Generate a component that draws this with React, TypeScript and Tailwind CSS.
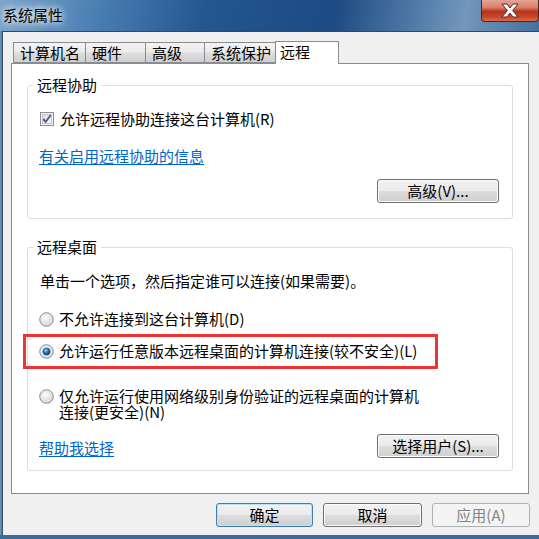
import React from "react";

const font = "font-['Noto_Sans_CJK_SC','Noto_Sans',sans-serif]";

function CheckBox() {
  return (
    <svg width="14" height="14" viewBox="0 0 14 14" className="shrink-0">
      <defs>
        <linearGradient id="cbg" x1="0" y1="0" x2="1" y2="1">
          <stop offset="0" stopColor="#d8d8d8" />
          <stop offset="1" stopColor="#fbfbfb" />
        </linearGradient>
      </defs>
      <rect x="0.5" y="0.5" width="13" height="13" fill="#f4f4f4" stroke="#8e8f8f" />
      <rect x="2.5" y="2.5" width="9" height="9" fill="url(#cbg)" stroke="#c6c6c6" />
      <path d="M3.2 7 L5.7 9.8 L10.8 3" fill="none" stroke="#4a5f97" strokeWidth="1.9" />
    </svg>
  );
}

function Radio({ checked }: { checked?: boolean }) {
  return (
    <svg width="15" height="15" viewBox="0 0 15 15" className="shrink-0">
      <defs>
        <radialGradient id="rbg" cx="0.4" cy="0.35" r="0.7">
          <stop offset="0" stopColor="#ffffff" />
          <stop offset="1" stopColor="#cfcfcf" />
        </radialGradient>
        <radialGradient id="rdot" cx="0.4" cy="0.35" r="0.65">
          <stop offset="0" stopColor="#9ad8ff" />
          <stop offset="0.5" stopColor="#1b7ccf" />
          <stop offset="1" stopColor="#0f3f74" />
        </radialGradient>
      </defs>
      <circle cx="7.5" cy="7.5" r="6.8" fill="url(#rbg)" stroke="#8c8c8c" />
      <circle cx="7.5" cy="7.5" r="5" fill="none" stroke="#e8e8e8" />
      {checked && <circle cx="7.5" cy="7.5" r="3.6" fill="url(#rdot)" stroke="#1d3f66" strokeWidth="0.6" />}
    </svg>
  );
}

function Btn({ label, w, disabled, focused }: { label: string; w: string; disabled?: boolean; focused?: boolean }) {
  const base = "h-[24px] rounded-[3px] border flex items-center justify-center text-[15px] leading-[16px]";
  if (disabled)
    return <div className={`${base} ${w} border-[#adb2b5] bg-[#f4f4f4] text-[#838383]`}>{label}</div>;
  return (
    <div
      className={`${base} ${w} ${
        focused ? "border-[#3c7fb1] shadow-[inset_0_0_0_1px_#b6e3f7]" : "border-[#707070] shadow-[inset_0_0_0_1px_#fbfbfb]"
      } bg-[linear-gradient(#f2f2f2_0%,#ebebeb_48%,#dddddd_52%,#cfcfcf_100%)] text-black`}
    >
      {label}
    </div>
  );
}

function Tab({ label, w, selected }: { label: string; w: string; selected?: boolean }) {
  if (selected)
    return (
      <div className={`${w} h-[23px] -mb-[1px] -ml-[1px] relative z-10 border border-b-0 border-[#898c95] bg-white pl-[4px] pt-[2px] text-[15px] leading-[16px]`}>
        {label}
      </div>
    );
  return (
    <div className={`${w} h-[21px] -ml-[1px] first:ml-0 border border-[#898c95] bg-[linear-gradient(#f3f3f3_0%,#ebebeb_45%,#dddddd_55%,#cfcfcf_100%)] pl-[6px] pt-[2px] text-[15px] leading-[16px]`}>
      {label}
    </div>
  );
}

export default function App() {
  return (
    <div className={`w-[539px] h-[539px] flex flex-col overflow-hidden bg-[#3d6a99] ${font} text-black`}>
      {/* Title bar */}
      <div className="h-[31px] shrink-0 flex justify-between bg-[linear-gradient(100deg,#7ea6cc_0%,#4a7fb3_18%,#245690_38%,#1d4a82_62%,#5c86b0_80%,#7396ba_86%,#44709e_100%)]">
        <div className="pl-[3px] pt-[6px] text-[15px] leading-[18px] text-black [text-shadow:0_0_6px_#ffffff,0_0_10px_#ffffff]">
          系统属性
        </div>
        <div className="w-[58px] h-[22px] rounded-b-[4px] border border-t-0 border-[#4c2520] bg-[linear-gradient(#e5a393_0%,#d8806b_35%,#b8321c_55%,#c8452a_80%,#e06a45_100%)] flex items-center justify-center">
          <svg width="22" height="15" viewBox="0 0 22 15">
            <path d="M3 1 L8 1 L11 5 L14 1 L19 1 L13.6 7.5 L19 14 L14 14 L11 10 L8 14 L3 14 L8.4 7.5 Z" fill="#ffffff" stroke="#5a2a22" strokeWidth="1" />
          </svg>
        </div>
      </div>

      {/* Body */}
      <div className="flex-1 flex">
        <div className="w-[3px] bg-[linear-gradient(90deg,#6f95b8,#4d7aa2)] border-r border-[#33506d]" />
        <div className="flex-1 flex flex-col bg-[#f0f0f0] border-t border-[#2f4a66] pt-[8px]">
          {/* Tabs */}
          <div className="flex items-end pl-[10px] h-[23px]">
            <Tab label="计算机名" w="w-[73px]" />
            <Tab label="硬件" w="w-[61px]" />
            <Tab label="高级" w="w-[60px]" />
            <Tab label="系统保护" w="w-[72px]" />
            <Tab label="远程" w="w-[64px]" selected />
          </div>

          {/* Panel */}
          <div className="ml-[8px] w-[518px] h-[431px] border border-[#898c95] bg-white px-[15px] pt-[12px]">
            {/* 远程协助 */}
            <div className="mt-[9px] h-[134px] border border-[#d5dfe5] rounded-[3px] flex flex-col">
              <span className="-mt-[9px] ml-[5px] px-[4px] w-fit bg-white text-[15px] leading-[16px]">远程协助</span>
              <div className="mt-[18px] pl-[12px] flex items-center gap-[6px] text-[15px] leading-[16px]">
                <CheckBox />
                <span>允许远程协助连接这台计算机(R)</span>
              </div>
              <div className="mt-[21px] pl-[11px] text-[15px] leading-[16px]">
                <span className="text-[#0066cc] underline underline-offset-[2px]">有关启用远程协助的信息</span>
              </div>
              <div className="mt-[15px] pr-[13px] flex justify-end">
                <Btn label="高级(V)..." w="w-[122px]" />
              </div>
            </div>

            {/* 远程桌面 */}
            <div className="mt-[28px] h-[224px] border border-[#d5dfe5] rounded-[3px] flex flex-col">
              <span className="-mt-[9px] ml-[5px] px-[4px] w-fit bg-white text-[15px] leading-[16px]">远程桌面</span>
              <div className="mt-[18px] pl-[12px] text-[15px] leading-[16px]">单击一个选项，然后指定谁可以连接(如果需要)。</div>
              <div className="mt-[22px] pl-[11px] flex items-center gap-[5px] text-[15px] leading-[16px]">
                <Radio />
                <span>不允许连接到这台计算机(D)</span>
              </div>
              <div className="relative mt-[16px] pl-[11px] flex items-center gap-[5px] text-[15px] leading-[16px]">
                <div className="absolute -left-[5px] -top-[9px] w-[415px] h-[35px] border-[3px] border-[#ee3333]" />
                <Radio checked />
                <span>允许运行任意版本远程桌面的计算机连接(较不安全)(L)</span>
              </div>
              <div className="mt-[29px] pl-[11px] flex items-start gap-[5px] text-[15px] leading-[16px]">
                <div className="pt-[1px]">
                  <Radio />
                </div>
                <span>
                  仅允许运行使用网络级别身份验证的远程桌面的计算机
                  <br />
                  连接(更安全)(N)
                </span>
              </div>
              <div className="mt-[14px] pl-[11px] pr-[13px] flex items-end justify-between text-[15px] leading-[16px]">
                <span className="mb-[2px] text-[#0066cc] underline underline-offset-[2px]">帮助我选择</span>
                <Btn label="选择用户(S)..." w="w-[122px]" />
              </div>
            </div>
          </div>

          {/* Dialog buttons */}
          <div className="mt-[9px] pr-[9px] flex justify-end gap-[10px]">
            <Btn label="确定" w="w-[97px]" focused />
            <Btn label="取消" w="w-[99px]" />
            <Btn label="应用(A)" w="w-[98px]" disabled />
          </div>
        </div>
      </div>
      <div className="h-[4px] shrink-0 bg-[#3d6a99]" />
    </div>
  );
}
